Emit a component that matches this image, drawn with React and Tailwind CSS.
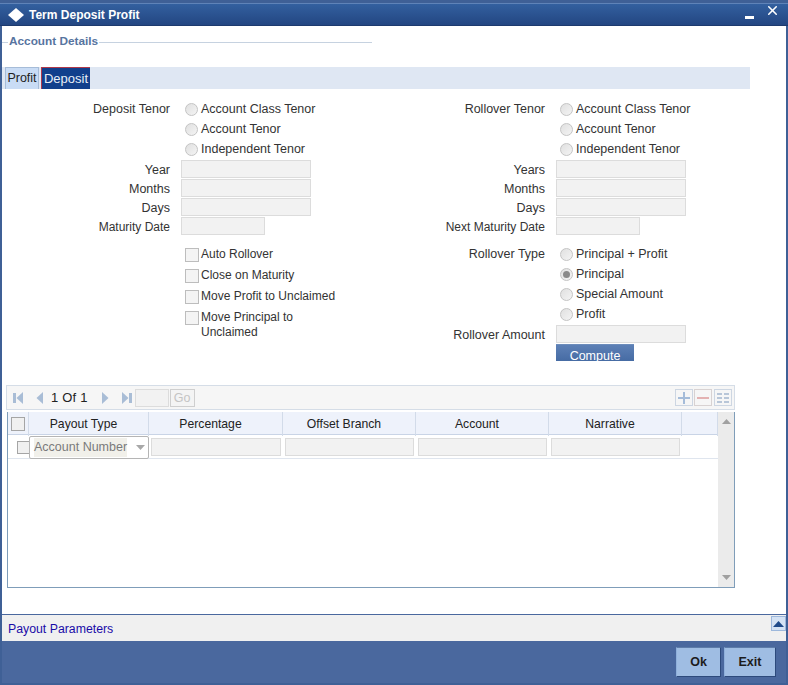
import { X } from 'lucide-react'

function Radio({ checked }) {
  return (
    <span className="flex h-[13px] w-[13px] shrink-0 items-center justify-center rounded-full border border-[#c4c4c4] bg-gradient-to-br from-[#e0e0e0] to-[#f4f4f4]">
      {checked ? <span className="h-[7px] w-[7px] rounded-full bg-[#8a8a8a]" /> : null}
    </span>
  )
}

function RadioRow({ label, checked, height = 'h-5' }) {
  return (
    <div className={`flex items-center pl-[179px] ${height}`}>
      <div className="ml-[4px]"><Radio checked={checked} /></div>
      <span className="ml-[3px] whitespace-nowrap">{label}</span>
    </div>
  )
}

function Field({ className }) {
  return <div className={`h-[18px] border border-[#dcdcdc] bg-[#f2f2f2] ${className}`} />
}

function FieldRow({ label, width = 'w-[130px]', labelClass = '' }) {
  return (
    <div className="flex h-[19px] items-start">
      <label className={`w-[168px] whitespace-nowrap pt-[1px] text-right leading-[19px] ${labelClass}`}>{label}</label>
      <Field className={`ml-[11px] ${width}`} />
    </div>
  )
}

function Check({ label }) {
  return (
    <div className="flex items-start pl-[183px] text-[12px]">
      <span className="mt-[1px] h-[14px] w-[14px] shrink-0 border border-[#bdbdbd] bg-[#f4f4f4]" />
      <span className="ml-[2px] w-[130px] leading-[15px]">{label}</span>
    </div>
  )
}

function LabeledRadio({ label, text }) {
  return (
    <div className="flex h-5 items-center">
      <label className="w-[168px] whitespace-nowrap text-right">{label}</label>
      <div className="ml-[15px]"><Radio /></div>
      <span className="ml-[3px] whitespace-nowrap">{text}</span>
    </div>
  )
}

function Pager({ flip, bar }) {
  return (
    <svg width="11" height="12" viewBox="0 0 11 12" className={flip ? 'rotate-180' : ''}>
      {bar ? <rect x="0" y="1" width="3" height="10" fill="#a9bdd6" /> : null}
      <path d="M10 0v12L3.5 6z" fill="#a9bdd6" />
    </svg>
  )
}

const columns = 'grid grid-cols-[21px_120px_134px_133px_133px_133px_36px]'

export default function App() {
  return (
    <div className="flex h-[685px] w-[788px] flex-col overflow-hidden bg-[#3f6096] font-['Liberation_Sans',Arial,sans-serif] text-[12.5px] text-[#333]">
      <header className="mt-[3px] flex h-[23px] shrink-0 items-center border-t border-[#5f83b8] border-b border-b-[#1d3a6e] bg-gradient-to-b from-[#33609f] to-[#234682] pl-[6px] pr-[8px] text-white">
        <svg width="20" height="16" viewBox="0 0 20 16">
          <path d="M10 1l8 7-8 7-8-7z" fill="#fff" />
        </svg>
        <h1 className="ml-[3px] text-[12px] font-bold">Term Deposit Profit</h1>
        <span className="ml-auto mt-[5px] h-[3px] w-[9px] bg-white" />
        <X className="ml-[11px] -mt-[9px] h-[15px] w-[15px]" strokeWidth={2.5} />
      </header>

      <main className="ml-[2px] mr-[2px] h-[588px] shrink-0 bg-white">
        <div className="mt-[6px] flex h-[20px] items-center">
          <span className="h-px w-[6px] bg-[#c6d2e0]" />
          <h2 className="mx-[1px] text-[11.8px] font-bold text-[#57749f]">Account Details</h2>
          <span className="h-px w-[273px] bg-[#c6d2e0]" />
        </div>

        <div className="mt-[15px] flex h-[22px] w-[748px] items-stretch bg-[#dfe7f3] pl-[3px]">
          <button className="w-[34px] border border-b-0 border-[#a6bcd8] bg-[#c9dcf5] text-[12.5px] text-[#222]">Profit</button>
          <button className="ml-[2px] w-[49px] border-l border-t border-[#b0384a] bg-[#113f8c] text-[13px] text-[#e8eef8]">Deposit</button>
        </div>

        <section className="mt-[10px] grid h-[262px] grid-cols-[375px_1fr] overflow-hidden">
          <div>
            <LabeledRadio label="Deposit Tenor" text="Account Class Tenor" />
            <RadioRow label="Account Tenor" />
            <RadioRow label="Independent Tenor" />
            <div className="mt-[1px]">
              <FieldRow label="Year" />
              <FieldRow label="Months" />
              <FieldRow label="Days" />
              <FieldRow label="Maturity Date" width="w-[84px]" labelClass="text-[12px]" />
            </div>
            <div className="mt-[11px] flex flex-col gap-[6px]">
              <Check label="Auto Rollover" />
              <Check label="Close on Maturity" />
              <div className="whitespace-nowrap"><Check label="Move Profit to Unclaimed" /></div>
              <Check label="Move Principal to Unclaimed" />
            </div>
          </div>

          <div>
            <LabeledRadio label="Rollover Tenor" text="Account Class Tenor" />
            <RadioRow label="Account Tenor" />
            <RadioRow label="Independent Tenor" />
            <div className="mt-[1px]">
              <FieldRow label="Years" />
              <FieldRow label="Months" />
              <FieldRow label="Days" />
              <FieldRow label="Next Maturity Date" width="w-[84px]" labelClass="text-[12px]" />
            </div>
            <div className="mt-[8px]">
              <LabeledRadio label="Rollover Type" text="Principal + Profit" />
              <RadioRow label="Principal" checked />
              <RadioRow label="Special Amount" />
              <RadioRow label="Profit" />
            </div>
            <div className="mt-[1px]">
              <FieldRow label="Rollover Amount" />
            </div>
            <div className="ml-[179px] h-[22px] w-[78px] border-t border-[#6d8dbc] bg-gradient-to-b from-[#5d80b6] to-[#3f659e] pt-[2px] text-center text-[12.5px] text-white">
              Compute
            </div>
          </div>
        </section>

        <section className="ml-[4px] mt-[24px] w-[729px]">
          <div className="flex h-[25px] items-center border border-[#d5dde7] bg-[#f6f6f6] pl-[6px]">
            <Pager bar />
            <span className="ml-[9px]"><Pager /></span>
            <span className="ml-[7px] text-[13px] tracking-[0.2px] text-[#222]">1 Of 1</span>
            <span className="ml-[13px]"><Pager flip /></span>
            <span className="ml-[9px]"><Pager flip bar /></span>
            <span className="ml-[3px] h-[18px] w-[34px] border border-[#dcdcdc] bg-[#f2f2f2]" />
            <span className="ml-[1px] h-[18px] w-[25px] border border-[#cfcfcf] bg-[#f4f4f4] text-center leading-[16px] text-[#c4c4c4]">Go</span>
            <div className="ml-auto mr-[2px] flex gap-[1px]">
              <span className="flex h-[17px] w-[18px] items-center justify-center border border-[#cdd6e2] text-[#a5bcd9]">
                <svg width="12" height="12" viewBox="0 0 12 12"><path d="M5 0h2v5h5v2H7v5H5V7H0V5h5z" fill="currentColor" /></svg>
              </span>
              <span className="flex h-[17px] w-[18px] items-center justify-center border border-[#d8d2d2] text-[#e3b2b2]">
                <span className="h-[2px] w-[12px] bg-current" />
              </span>
              <span className="ml-[1px] flex h-[17px] w-[18px] items-center justify-center border border-[#cdd6e2] text-[#b8c6d8]">
                <svg width="12" height="10" viewBox="0 0 12 10"><path d="M0 0h5v2H0zM7 0h5v2H7zM0 4h5v2H0zM7 4h5v2H7zM0 8h5v2H0zM7 8h5v2H7z" fill="currentColor" /></svg>
              </span>
            </div>
          </div>

          <div className="ml-[1px] mt-[2px] flex h-[176px] border-b border-l border-r border-[#7f9db9]">
            <div className="w-[710px]">
              <div className={`${columns} h-[23px] border-b border-[#c9d4e6] bg-[#eef2fb] text-center text-[12.2px] leading-[24px] text-[#222]`}>
                <div className="flex items-center justify-center border-r border-[#d2dbe9]">
                  <span className="h-[14px] w-[14px] border border-[#a5a5a5] bg-[#f0f0f0]" />
                </div>
                <div className="border-r border-[#d2dbe9] pr-[10px]">Payout Type</div>
                <div className="border-r border-[#d2dbe9] pr-[10px]">Percentage</div>
                <div className="border-r border-[#d2dbe9] pr-[10px]">Offset Branch</div>
                <div className="border-r border-[#d2dbe9] pr-[10px]">Account</div>
                <div className="border-r border-[#d2dbe9] pr-[10px]">Narrative</div>
                <div className="border-r border-[#d2dbe9]" />
              </div>
              <div className={`${columns} h-[24px] items-center border-b border-[#dfe5ee]`}>
                <div className="flex justify-end">
                  <span className="mr-[-1px] h-[13px] w-[13px] border border-[#a5a5a5] bg-[#f0f0f0]" />
                </div>
                <div className="relative z-10 mt-[1px] flex h-[23px] w-[120px] items-center rounded-[2px] border border-[#b5b5b5] bg-white pl-[4px] text-[#7a7a7a]">
                  <span className="bg-[#f1f0ea]">Account Number</span>
                  <svg width="9" height="5" viewBox="0 0 9 5" className="ml-[9px]"><path d="M0 0h9L4.5 5z" fill="#a8a8a8" /></svg>
                </div>
                <Field className="ml-[2px] w-[130px]" />
                <Field className="ml-[2px] w-[129px]" />
                <Field className="ml-[2px] w-[129px]" />
                <Field className="ml-[2px] w-[129px]" />
              </div>
            </div>
            <div className="ml-auto flex w-[17px] flex-col items-center justify-between bg-[#ebebeb] py-[7px]">
              <svg width="9" height="5" viewBox="0 0 9 5"><path d="M0 5h9L4.5 0z" fill="#a0a0a0" /></svg>
              <svg width="9" height="5" viewBox="0 0 9 5"><path d="M0 0h9L4.5 5z" fill="#a0a0a0" /></svg>
            </div>
          </div>
        </section>
      </main>

      <div className="ml-[2px] mr-[2px] flex h-[27px] shrink-0 items-start justify-between border-t border-[#4a689e] bg-[#f0f0f0] pl-[6px]">
        <a className="mt-[5px] text-[12.3px] text-[#1a0ca8]">Payout Parameters</a>
        <span className="mt-[1px] flex h-[15px] w-[15px] items-center justify-center border border-[#9db8dc] bg-[#d4e2f4]">
          <svg width="11" height="6" viewBox="0 0 11 6"><path d="M0 6h11L5.5 0z" fill="#1f4a8a" /></svg>
        </span>
      </div>

      <footer className="ml-[2px] mr-[2px] flex h-[42px] shrink-0 items-start justify-end gap-[3px] bg-[#4a689e] pr-[10px] pt-[6px]">
        <button className="h-[30px] w-[45px] border border-[#2d4a7c] border-l-[#8fb0db] border-t-[#5d7ca9] bg-[#9fbde3] text-[12.5px] font-bold text-[#1c1c1c]">Ok</button>
        <button className="h-[30px] w-[52px] border border-[#2d4a7c] border-l-[#8fb0db] border-t-[#5d7ca9] bg-[#9fbde3] text-[12.5px] font-bold text-[#1c1c1c]">Exit</button>
      </footer>
    </div>
  )
}
